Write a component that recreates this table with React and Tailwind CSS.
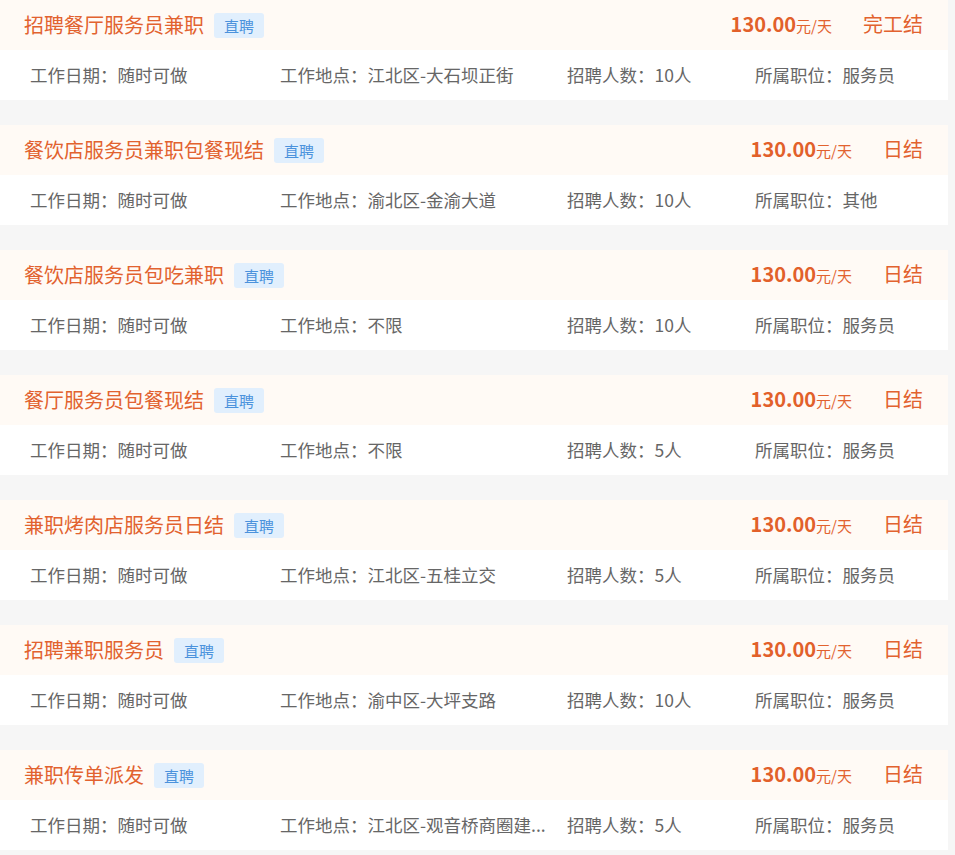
import React from "react";

const jobs = [
  { title: "招聘餐厅服务员兼职", settle: "完工结", place: "江北区-大石坝正街", count: "10人", role: "服务员" },
  { title: "餐饮店服务员兼职包餐现结", settle: "日结", place: "渝北区-金渝大道", count: "10人", role: "其他" },
  { title: "餐饮店服务员包吃兼职", settle: "日结", place: "不限", count: "10人", role: "服务员" },
  { title: "餐厅服务员包餐现结", settle: "日结", place: "不限", count: "5人", role: "服务员" },
  { title: "兼职烤肉店服务员日结", settle: "日结", place: "江北区-五桂立交", count: "5人", role: "服务员" },
  { title: "招聘兼职服务员", settle: "日结", place: "渝中区-大坪支路", count: "10人", role: "服务员" },
  { title: "兼职传单派发", settle: "日结", place: "江北区-观音桥商圈建...", count: "5人", role: "服务员" },
];

const JobCard = ({ job }) => {
  return (
    <div className="w-[948px] mb-[25px]">
      <div className="h-[50px] bg-[#fffaf5] flex items-center pl-[24px] pr-[25px]">
        <span className="text-[20px] leading-[28px] text-[#e2622f]">{job.title}</span>
        <span className="ml-[10px] h-[25px] px-[10px] rounded-[3px] bg-[#e1effd] text-[#4b92dc] text-[15px] leading-[25px]">
          直聘
        </span>
        <div className="ml-auto flex items-baseline">
          <span className="text-[20px] font-bold leading-[28px] text-[#e2602a]">130.00</span>
          <span className="text-[15px] leading-[28px] text-[#e2622f]">元/天</span>
          <span className="ml-[31px] text-[20px] leading-[28px] text-[#e2622f]">{job.settle}</span>
        </div>
      </div>
      <div className="h-[50px] bg-white flex items-center pl-[30px] text-[17.5px] leading-[26px] text-[#666666]">
        <div className="w-[250px] whitespace-nowrap">工作日期：随时可做</div>
        <div className="w-[287px] whitespace-nowrap">工作地点：{job.place}</div>
        <div className="w-[188px] whitespace-nowrap">招聘人数：{job.count}</div>
        <div className="flex-1 whitespace-nowrap">所属职位：{job.role}</div>
      </div>
    </div>
  );
};

export default function App() {
  return (
    <div
      className="min-h-[855px] bg-[#f6f6f6]"
      style={{ fontFamily: '"Noto Sans CJK SC", "Noto Sans", sans-serif' }}
    >
      {jobs.map((job, i) => (
        <JobCard key={i} job={job} />
      ))}
    </div>
  );
}
